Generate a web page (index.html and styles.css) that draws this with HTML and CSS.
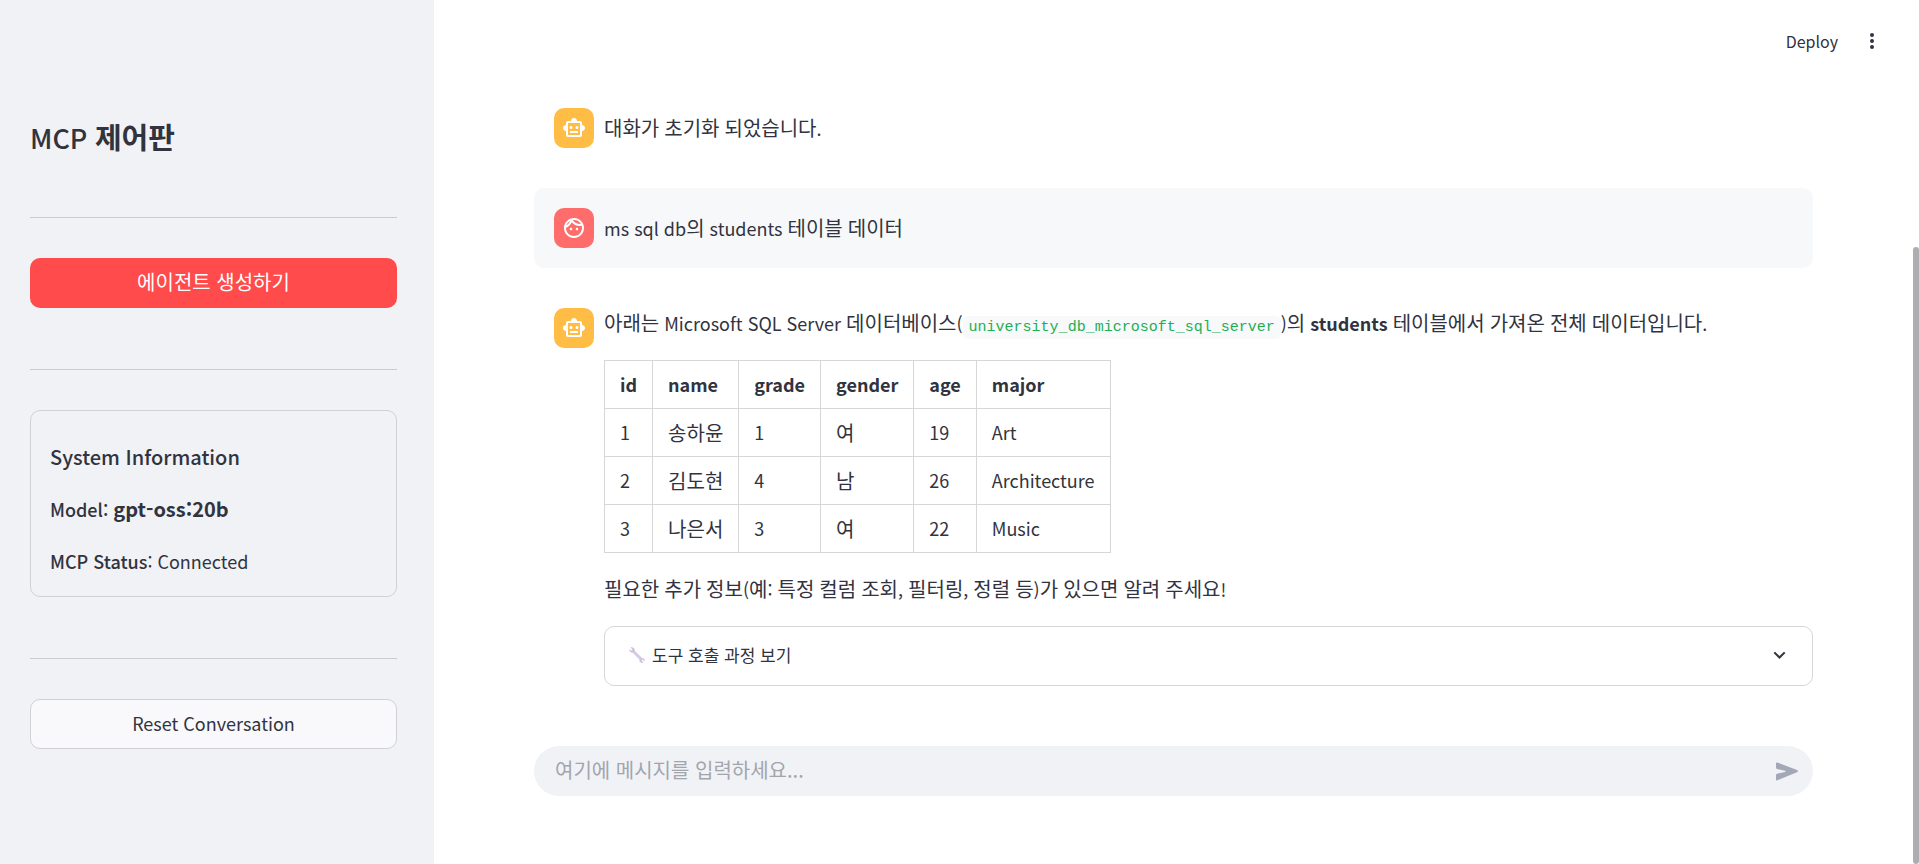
FILE: index.html
```html
<!DOCTYPE html>
<html lang="ko">
<head>
<meta charset="utf-8">
<title>MCP 제어판</title>
<link rel="stylesheet" href="styles.css">
</head>
<body>
<svg class="sprite" aria-hidden="true">
  <symbol id="robot" viewBox="0 0 24 24"><path d="M20 9V7c0-1.1-.9-2-2-2h-3c0-1.66-1.34-3-3-3S9 3.34 9 5H6c-1.1 0-2 .9-2 2v2c-1.66 0-3 1.34-3 3s1.34 3 3 3v4c0 1.1.9 2 2 2h12c1.1 0 2-.9 2-2v-4c1.66 0 3-1.34 3-3s-1.34-3-3-3zm-2 10H6V7h12v12zm-9-6c-.83 0-1.5-.67-1.5-1.5S8.170 10 9 10s1.500.67 1.500 1.500S9.830 13 9 13zm7.500-1.500c0 .83-.67 1.500-1.500 1.500s-1.500-.67-1.500-1.500.67-1.500 1.500-1.500 1.500.67 1.500 1.500zM8 15h8v2H8v-2z"/></symbol>
  <symbol id="face" viewBox="0 0 24 24"><path d="M10.250 13c0 .69-.56 1.250-1.250 1.250S7.750 13.690 7.750 13s.56-1.250 1.250-1.250 1.250.56 1.250 1.250zM15 11.750c-.69 0-1.250.56-1.250 1.250s.56 1.250 1.250 1.250 1.250-.56 1.250-1.250-.56-1.250-1.250-1.250zm7 .25c0 5.520-4.480 10-10 10S2 17.520 2 12 6.480 2 12 2s10 4.480 10 10zM10.660 4.120C12.060 6.440 14.600 8 17.500 8c.46 0 .91-.05 1.340-.12C17.440 5.560 14.900 4 12 4c-.46 0-.91.05-1.340.12zM4.420 9.470c1.710-.97 3.030-2.550 3.660-4.440C6.370 6 5.050 7.580 4.420 9.470zM20 12c0-.78-.12-1.530-.33-2.240-.7.15-1.420.24-2.170.24-3.130 0-5.920-1.440-7.760-3.690C8.690 8.870 6.600 10.880 4 11.860c.01.04 0 .09 0 .14 0 4.410 3.590 8 8 8s8-3.590 8-8z"/></symbol>
</svg>
<div class="app">
  <aside class="sidebar">
    <h1>MCP <span class="hangul">제어판</span></h1>
    <hr>
    <button class="button primary" type="button">에이전트 생성하기</button>
    <hr>
    <section class="card">
      <h2>System Information</h2>
      <p class="model">Model: <strong>gpt-oss:20b</strong></p>
      <p class="status"><b>MCP Status</b>: Connected</p>
    </section>
    <hr>
    <button class="button secondary" type="button">Reset Conversation</button>
  </aside>
  <main class="main">
    <header class="toolbar">
      <button class="deploy" type="button">Deploy</button>
      <button class="menu" type="button" aria-label="Menu"><svg viewBox="0 0 24 24"><circle cx="12" cy="6" r="2"/><circle cx="12" cy="12" r="2"/><circle cx="12" cy="18" r="2"/></svg></button>
    </header>
    <div class="chat">
      <article class="message">
        <span class="avatar assistant"><svg><use href="#robot"/></svg></span>
        <div class="body"><p><span class="hangul">대화가</span> <span class="hangul">초기화</span> <span class="hangul">되었습니다</span>.</p></div>
      </article>
      <article class="message from-user">
        <span class="avatar user"><svg><use href="#face"/></svg></span>
        <div class="body"><p>ms sql db<span class="hangul">의</span> students <span class="hangul">테이블</span> <span class="hangul">데이터</span></p></div>
      </article>
      <article class="message answer">
        <span class="avatar assistant"><svg><use href="#robot"/></svg></span>
        <div class="body">
          <p><span class="hangul">아래는</span> Microsoft SQL Server <span class="hangul">데이터베이스</span>(<code>university_db_microsoft_sql_server</code>)<span class="hangul">의</span> <strong>students</strong> <span class="hangul">테이블에서</span> <span class="hangul">가져온</span> <span class="hangul">전체</span> <span class="hangul">데이터입니다</span>.</p>
          <table>
            <thead><tr><th>id</th><th>name</th><th>grade</th><th>gender</th><th>age</th><th>major</th></tr></thead>
            <tbody>
              <tr><td>1</td><td class="hangul">송하윤</td><td>1</td><td class="hangul">여</td><td>19</td><td>Art</td></tr>
              <tr><td>2</td><td class="hangul">김도현</td><td>4</td><td class="hangul">남</td><td>26</td><td>Architecture</td></tr>
              <tr><td>3</td><td class="hangul">나은서</td><td>3</td><td class="hangul">여</td><td>22</td><td>Music</td></tr>
            </tbody>
          </table>
          <p><span class="hangul">필요한</span> <span class="hangul">추가</span> <span class="hangul">정보</span>(<span class="hangul">예</span>: <span class="hangul">특정</span> <span class="hangul">컬럼</span> <span class="hangul">조회</span>, <span class="hangul">필터링</span>, <span class="hangul">정렬</span> <span class="hangul">등</span>)<span class="hangul">가</span> <span class="hangul">있으면</span> <span class="hangul">알려</span> <span class="hangul">주세요</span>!</p>
          <button class="expander" type="button" aria-expanded="false">
            <svg class="wrench" viewBox="0 0 18 18"><path class="handle" d="M5 5l8 8"/><path class="jaw" d="M2.500 1.500l2 2-.8 1.200-2-1.500c-.8 1.700.8 4 3 3.200l2-2C7.200 2.200 4.700.7 2.500 1.500zM15.500 16.500l-2-2 1-1 2 2c.8-1.900-.9-4-3-3.400l-2 2c-.6 2.200 1.900 3.500 4 2.400z"/></svg>
            <span>도구 호출 과정 보기</span>
            <svg class="chevron" viewBox="0 0 24 24"><path d="M7 9l5 5 5-5"/></svg>
          </button>
        </div>
      </article>
      <form class="composer">
        <input type="text" aria-label="메시지" placeholder="여기에 메시지를 입력하세요...">
        <button type="button" aria-label="Send"><svg viewBox="0 0 24 19"><path d="M1 1.500Q1 0 2.500.5L22 8q2 1 0 2.300L2.500 18.300Q1 18.800 1 17.500V13q0-1 1-1.300L10 10q1.500-.7 0-1.300L2 7Q1 6.700 1 5.700z"/></svg></button>
      </form>
    </div>
  </main>
</div>
<div class="scroll-thumb" aria-hidden="true"></div>
</body>
</html>
```
FILE: styles.css
```css
* { box-sizing: border-box; }
body {
  margin: 0;
  color: #31333f;
  background: #fff;
  font: 18px/32px "Noto Sans CJK KR", "Noto Sans", sans-serif;
  overflow: hidden;
}
h1, h2, p { margin: 0; }
button, input { font: inherit; color: inherit; }
button { border: 0; background: none; padding: 0; cursor: pointer; }
svg { display: block; fill: currentColor; }
.sprite { display: none; }
.hangul { font-size: 20px; line-height: 30px; }

.app { display: flex; min-height: 100vh; }

.sidebar {
  flex: none;
  width: 434px;
  padding: 120px 37px 0 30px;
  background: #f0f2f6;
}
.sidebar h1 { font-size: 27px; line-height: 36px; font-weight: 500; }
.sidebar h1 .hangul { font-size: 29px; font-weight: 700; }
.sidebar hr { margin: 61px 0 40px; border: 0; border-top: 1px solid #cacccf; }
.button {
  display: block;
  width: 100%;
  height: 50px;
  padding-bottom: 2px;
  border-radius: 10px;
}
.primary { background: #ff4b4b; color: #fff; font-size: 20px; line-height: 30px; }
.secondary { border: 1px solid #cfd1d5; background: #f9f9fb; }
.card {
  padding: 30px 19px 19px;
  border: 1px solid #cfd1d5;
  border-radius: 10px;
}
.card h2 { font-size: 20px; font-weight: 500; }
.card p { margin-top: 20px; }
.card .model { font-weight: 500; }
.card .model strong { font-size: 20px; line-height: 30px; font-weight: 700; }
.card b { font-weight: 500; }

.main { flex: 1; min-width: 0; padding-right: 6px; }
.toolbar {
  display: flex;
  align-items: center;
  justify-content: flex-end;
  gap: 22px;
  height: 82px;
  padding-right: 29px;
}
.deploy { font-size: 16px; }
.menu svg { width: 24px; height: 24px; }

.chat { padding: 6px 100px 0; }
.message { display: flex; gap: 10px; padding: 20px; border-radius: 10px; }
.message + .message { margin-top: 20px; }
.from-user { background: #f7f8fa; }
.avatar {
  flex: none;
  display: grid;
  place-items: center;
  width: 40px;
  height: 40px;
  border-radius: 10px;
  color: #fff;
}
.avatar svg { width: 24px; height: 24px; }
.assistant { background: #ffbd45; }
.user { background: #ff6c6c; }
.body { flex: 1; min-width: 0; align-self: center; }
.body p { line-height: 31px; }
.answer { padding-right: 0; padding-bottom: 0; }
code {
  padding: 3px 6px;
  border-radius: 5px;
  background: #f8f9fb;
  color: #1eae54;
  font: 15px/20px "Liberation Mono", monospace;
}
table { margin: 21px 0; border-collapse: collapse; }
th, td {
  padding: 8px 15px;
  border: 1px solid #d6d6d9;
  line-height: 31px;
  text-align: left;
}
th { font-weight: 700; }
.expander {
  display: flex;
  align-items: center;
  gap: 6px;
  width: 100%;
  height: 60px;
  margin-top: 21px;
  padding: 0 20px 2px 23px;
  border: 1px solid #d6d6d9;
  border-radius: 10px;
  font-size: 17px;
}
.wrench { width: 18px; height: 18px; }
.wrench .handle { stroke: #d6c9e6; stroke-width: 3; }
.wrench .jaw { fill: #cdc3d9; }
.chevron {
  width: 25px;
  height: 25px;
  margin-left: auto;
  fill: none;
  stroke: currentColor;
  stroke-width: 2;
}
.composer {
  display: flex;
  align-items: center;
  height: 50px;
  margin-top: 60px;
  padding: 0 14px 0 21px;
  border-radius: 25px;
  background: #f0f2f6;
}
.composer input {
  flex: 1;
  min-width: 0;
  padding: 0 0 2px;
  border: 0;
  outline: 0;
  background: none;
  font-size: 20px;
}
.composer input::placeholder { color: #a3a5ad; opacity: 1; }
.composer svg { width: 24px; height: 19px; color: #a3a8b8; }

.scroll-thumb {
  position: fixed;
  top: 247px;
  right: 0;
  bottom: 0;
  width: 6px;
  border-radius: 3px;
  background: #adadb2;
}
```
